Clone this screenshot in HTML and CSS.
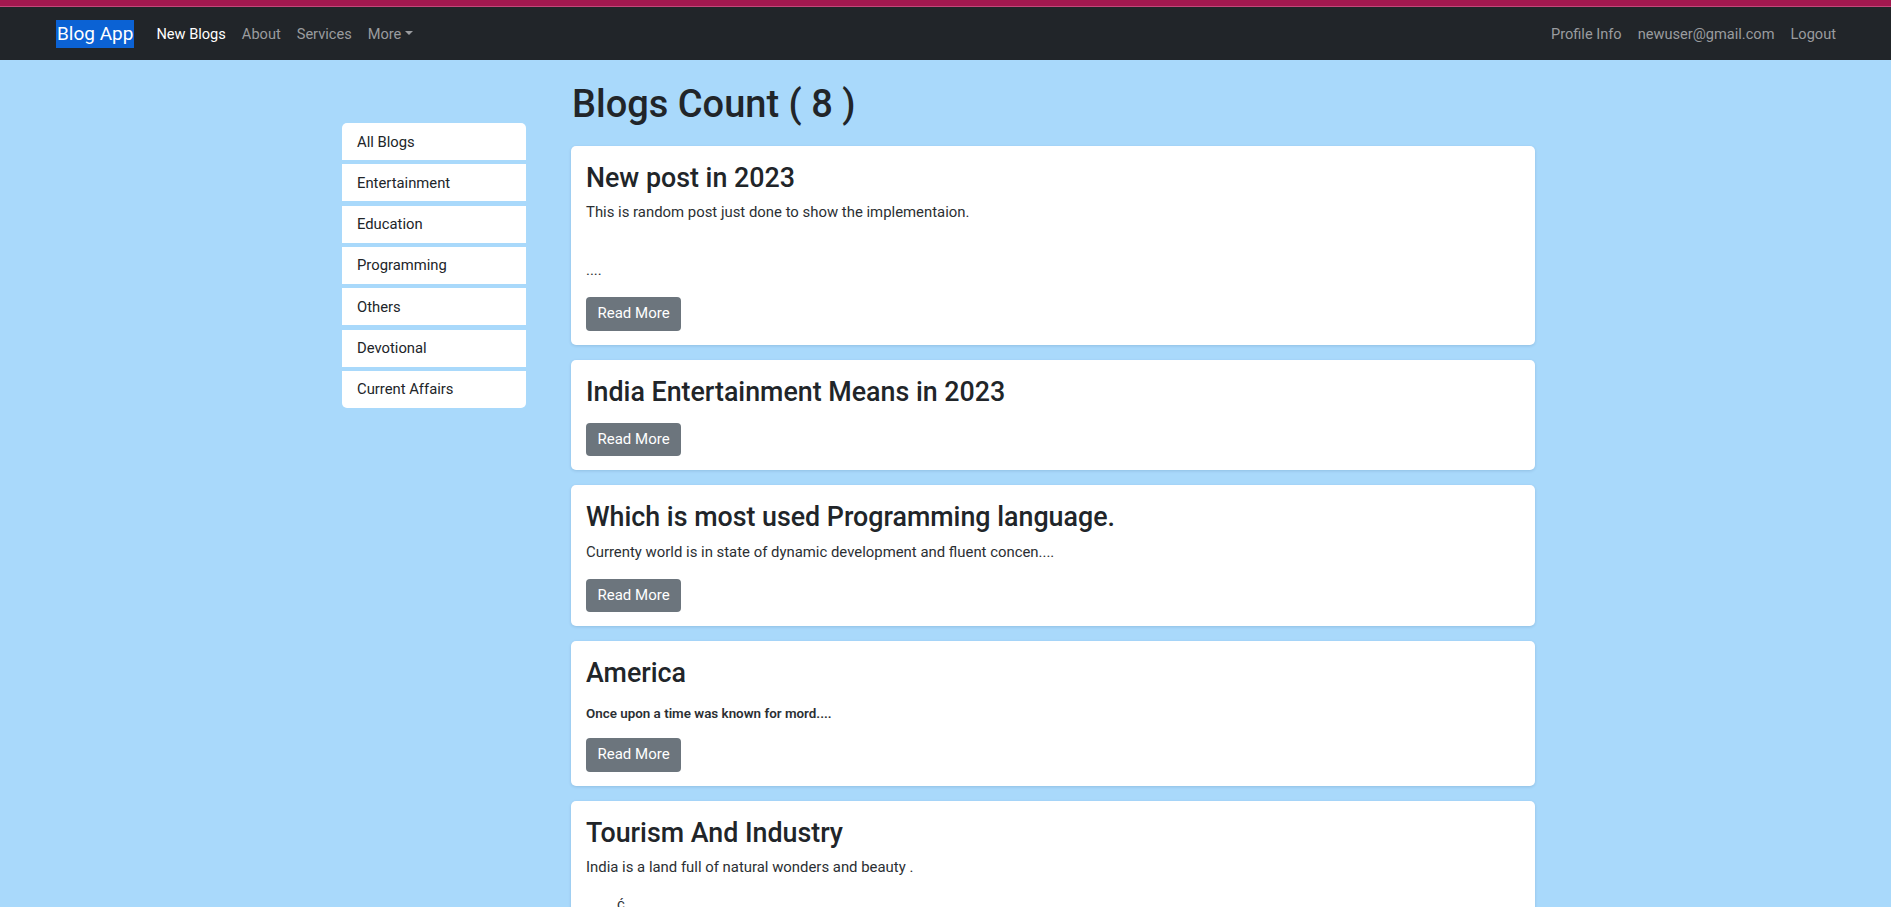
FILE: index.html
```html
<!DOCTYPE html>
<html lang="en">
<head>
<meta charset="utf-8">
<title>Blog App</title>
<link rel="stylesheet" href="styles.css">
</head>
<body>
<div class="topstrip"></div>
<nav class="navbar">
  <div class="nav-left">
    <a class="brand" href="#">Blog App</a>
    <a class="nav-link active" href="#">New Blogs</a>
    <a class="nav-link" href="#">About</a>
    <a class="nav-link" href="#">Services</a>
    <a class="nav-link dropdown-toggle" href="#">More</a>
  </div>
  <div class="nav-right">
    <a class="nav-link" href="#">Profile Info</a>
    <a class="nav-link" href="#">newuser@gmail.com</a>
    <a class="nav-link" href="#">Logout</a>
  </div>
</nav>
<div class="layout">
  <aside class="sidebar">
    <a class="cat" href="#">All Blogs</a>
    <a class="cat" href="#">Entertainment</a>
    <a class="cat" href="#">Education</a>
    <a class="cat" href="#">Programming</a>
    <a class="cat" href="#">Others</a>
    <a class="cat" href="#">Devotional</a>
    <a class="cat" href="#">Current Affairs</a>
  </aside>
  <main class="content">
    <h1 class="count">Blogs Count ( 8 )</h1>
    <div class="card">
      <h3 class="card-title">New post in 2023</h3>
      <p class="card-text">This is random post just done to show the implementaion.<br>&nbsp;</p>
      <p class="card-text">....</p>
      <a class="btn" href="#">Read More</a>
    </div>
    <div class="card">
      <h3 class="card-title">India Entertainment Means in 2023</h3>
      <p class="card-text empty"></p>
      <a class="btn" href="#">Read More</a>
    </div>
    <div class="card">
      <h3 class="card-title">Which is most used Programming language.</h3>
      <p class="card-text">Currenty world is in state of dynamic development and fluent concen....</p>
      <a class="btn" href="#">Read More</a>
    </div>
    <div class="card">
      <h3 class="card-title">America</h3>
      <p class="card-text strong">Once upon a time was known for mord....</p>
      <a class="btn" href="#">Read More</a>
    </div>
    <div class="card">
      <h3 class="card-title">Tourism And Industry</h3>
      <p class="card-text">India is a land full of natural wonders and beauty .</p>
      <p class="card-text indent">ć</p>
    </div>
  </main>
</div>
</body>
</html>
```
FILE: styles.css
```css
* { box-sizing: border-box; }
html, body { margin: 0; padding: 0; }
body {
  background: #a9d9fb;
  font-family: Roboto, "Noto Sans", sans-serif;
  color: #212529;
}
a { text-decoration: none; }

.topstrip {
  height: 7px;
  background: #a3184f;
  border-bottom: 1px solid #c4477a;
}

.navbar {
  height: 53px;
  background: #212529;
  display: flex;
  align-items: center;
  justify-content: space-between;
  padding: 0 47px 0 56px;
}
.nav-left, .nav-right { display: flex; align-items: center; }
.brand {
  display: inline-block;
  background: #0b62d4;
  color: #fff;
  font-size: 19px;
  line-height: 28px;
  padding: 0 1px;
  margin-right: 14px;
}
.nav-link {
  color: #9a9c9f;
  font-size: 14.6px;
  line-height: 24px;
  padding: 0 8px;
}
.nav-link.active { color: #fff; }
.dropdown-toggle::after {
  content: "";
  display: inline-block;
  margin-left: 4px;
  vertical-align: 4px;
  border-top: 4.5px solid;
  border-left: 4.5px solid transparent;
  border-right: 4.5px solid transparent;
}

.layout {
  display: flex;
  align-items: flex-start;
  gap: 45px;
  padding-left: 342px;
}
.sidebar {
  width: 184px;
  margin-top: 63px;
  display: flex;
  flex-direction: column;
  gap: 4.33px;
}
.cat {
  display: flex;
  align-items: center;
  height: 37px;
  padding: 0 15px;
  background: #fff;
  color: #212529;
  font-size: 14.8px;
}
.cat:first-child { border-radius: 5px 5px 0 0; }
.cat:last-child { border-radius: 0 0 5px 5px; }

.content {
  width: 964px;
  padding-top: 21px;
}
.count {
  margin: 0 0 19px;
  font-size: 38px;
  line-height: 46px;
  font-weight: 500;
  padding-left: 1px;
}
.card {
  background: #fff;
  border-radius: 5px;
  box-shadow: 0 1px 3px rgba(40, 80, 120, 0.18);
  padding: 17px 16px 14px 15px;
  margin-bottom: 15px;
}
.card-title {
  margin: 0 0 8px;
  font-size: 26.8px;
  line-height: 31.2px;
  font-weight: 500;
}
.card-text {
  margin: 0 0 16px;
  font-size: 14.9px;
  line-height: 21px;
  color: #2b2f33;
}
.card-text.empty { margin-bottom: 15px; }
.card-text.strong {
  font-size: 13.4px;
  font-weight: 600;
  margin-top: 14px;
  margin-bottom: 14px;
}
.card-text.indent { padding-left: 31px; }
.btn {
  display: inline-block;
  background: #6c757d;
  color: #fff;
  font-size: 15px;
  line-height: 21.5px;
  padding: 6px 11.5px;
  border-radius: 4px;
}
```
